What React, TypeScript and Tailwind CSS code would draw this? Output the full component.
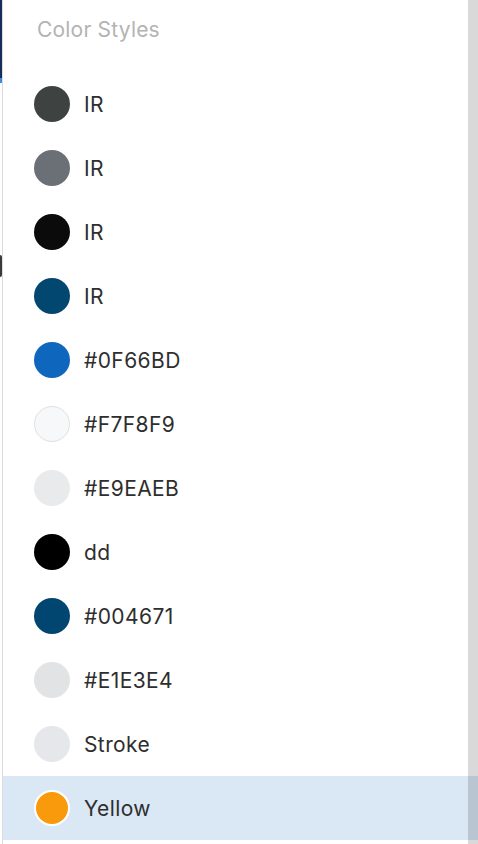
import React from "react";

const rows: { color: string; label: string; ring?: boolean; selected?: boolean }[] = [
  { color: "#3e4341", label: "IR" },
  { color: "#6b6f76", label: "IR" },
  { color: "#0b0b0b", label: "IR" },
  { color: "#024770", label: "IR" },
  { color: "#0f66bd", label: "#0F66BD" },
  { color: "#f7f8f9", label: "#F7F8F9", ring: true },
  { color: "#e9eaeb", label: "#E9EAEB" },
  { color: "#000000", label: "dd" },
  { color: "#004671", label: "#004671" },
  { color: "#e1e3e4", label: "#E1E3E4" },
  { color: "#e6e7ea", label: "Stroke" },
  { color: "#f89a0c", label: "Yellow", selected: true },
];

export default function App() {
  return (
    <div
      className="relative flex h-[844px] w-[478px] overflow-hidden bg-white"
      style={{ fontFamily: "Inter, 'Noto Sans', sans-serif" }}
    >
      <div className="flex w-[2px] shrink-0 flex-col">
        <div className="h-[78px] bg-[#14305a]" />
        <div className="h-[5px] bg-[#3b8be0]" />
        <div className="h-[172px] bg-white" />
        <div className="h-[22px] rounded-r-full bg-[#3a3a3a]" />
        <div className="flex-1 bg-white" />
      </div>
      <div className="flex flex-1 flex-col border-l border-[#dcdcdc]">
        <div className="h-[72px] pl-[34px] pt-[19px] text-[21px] leading-none tracking-[0.2px] text-[#b3b3b3]">
          Color Styles
        </div>
        {rows.map((r, i) => (
          <div
            key={i}
            className={`flex h-[64px] items-center pl-[31px] ${r.selected ? "bg-[#dae8f5]" : ""}`}
          >
            <div
              className={`h-[36px] w-[36px] shrink-0 rounded-full ${
                r.selected
                  ? "border-2 border-white"
                  : r.ring
                  ? "border border-[#dfe0e2]"
                  : ""
              }`}
              style={{ backgroundColor: r.color }}
            />
            <span className="ml-[14px] text-[21px] leading-none tracking-[0.4px] text-[#2e2e2e]">
              {r.label}
            </span>
          </div>
        ))}
      </div>
      <div className="absolute right-0 top-0 h-full w-[10px] bg-black/15" />
    </div>
  );
}
